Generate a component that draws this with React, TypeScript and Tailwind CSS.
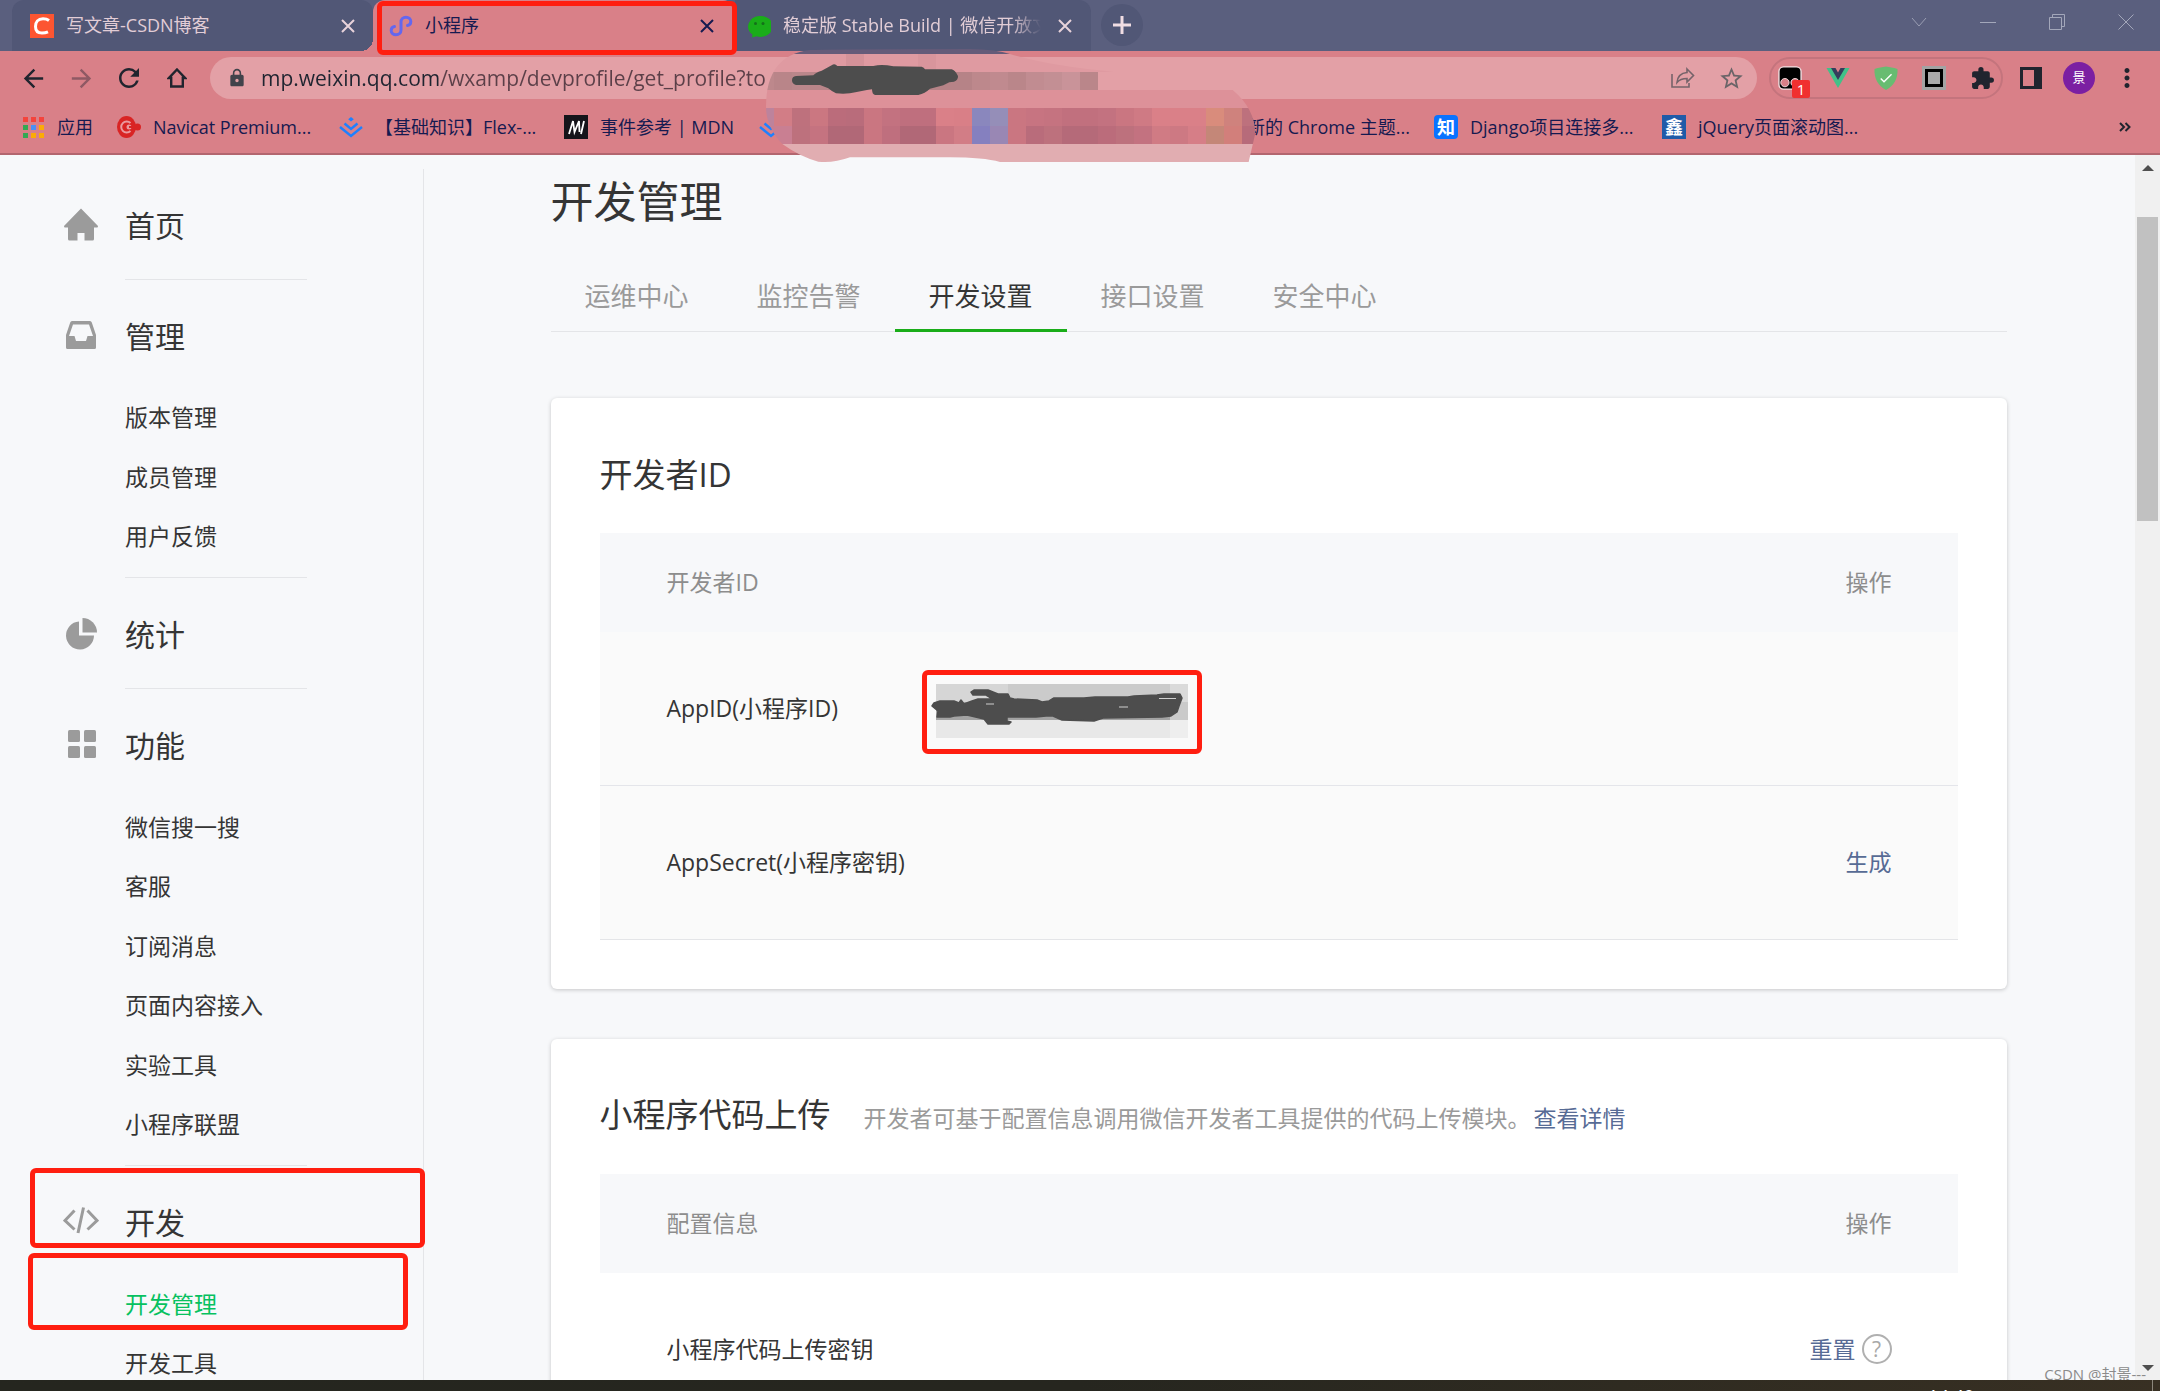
import type { ReactNode } from "react";
import {
  MdArrowBack,
  MdArrowForward,
  MdCheck,
  MdExtension,
  MdLock,
  MdMoreVert,
  MdRefresh,
  MdStarOutline,
} from "react-icons/md";

// ─── Data ─────────────────────────────────────────────────────────────────────

interface MenuGroup {
  title: string;
  icon: ReactNode;
  items: string[];
  listClass?: string;
}

const MENU: MenuGroup[] = [
  { title: "首页", icon: <HomeIcon />, items: [] },
  {
    title: "管理",
    icon: <InboxIcon />,
    items: ["版本管理", "成员管理", "用户反馈"],
    listClass: "h-[178px]",
  },
  { title: "统计", icon: <PieIcon />, items: [] },
  {
    title: "功能",
    icon: <GridIcon />,
    items: ["微信搜一搜", "客服", "订阅消息", "页面内容接入", "实验工具", "小程序联盟"],
    listClass: "h-[357px]",
  },
  {
    title: "开发",
    icon: <CodeIcon />,
    items: ["开发管理", "开发工具"],
    listClass: "h-[119px]",
  },
];

const ACTIVE_ITEM = "开发管理";
const MARKED_GROUP = "开发";

const TABS = ["运维中心", "监控告警", "开发设置", "接口设置", "安全中心"];
const ACTIVE_TAB = "开发设置";

interface Bookmark {
  title: string;
  icon?: ReactNode;
  width: string;
}

const BOOKMARKS: Bookmark[] = [
  { title: "应用", icon: <AppsIcon />, width: "w-24" },
  { title: "Navicat Premium...", icon: <NavicatIcon />, width: "w-[222px]" },
  { title: "【基础知识】Flex-...", icon: <JuejinIcon />, width: "w-[225px]" },
  { title: "事件参考 | MDN", icon: <MdnIcon />, width: "w-[195px]" },
  { title: "", icon: <JuejinIcon />, width: "w-[488px]" },
  { title: "新的 Chrome 主题...", width: "w-[187px]" },
  {
    title: "Django项目连接多...",
    icon: (
      <span className="flex size-6 items-center justify-center rounded bg-[#0a73ff] text-[18px] leading-6 font-bold text-white">
        知
      </span>
    ),
    width: "w-[228px]",
  },
  {
    title: "jQuery页面滚动图...",
    icon: (
      <span className="flex size-6 items-center justify-center bg-[#1f5ba8] text-[18px] leading-6 font-bold text-white">
        鑫
      </span>
    ),
    width: "w-[228px]",
  },
];

// Pixelated cells of the blurred address and bookmarks, 54 units wide each
const MOSAIC_UPPER = [
  "#bd839c", "#d27d86", "#be717d", "#cb7781", "#bb6c7b", "#b96c7b", "#ca7681",
  "#c37280", "#bf6f7e", "#bf6f7e", "#da8088", "#d97f87", "#8a87bd", "#958eb8",
  "#ca7681", "#c77481", "#c57380", "#c1707e", "#c1707e", "#c37280", "#ca7681",
  "#cf7a84", "#da8088", "#da8088", "#da8088", "#d98c7c", "#cf827d", "#bd717d",
];

const MOSAIC_LOWER = [
  "#c87f92", "#c97f92", "#bd717d", "#c57380", "#b16877", "#b16877", "#ca7681",
  "#bf6f7e", "#b16877", "#b16877", "#ca7681", "#d27d86", "#8580bf", "#9987b4",
  "#ca7681", "#b96c7b", "#bd717d", "#b56a79", "#b56a79", "#bb6c7b", "#bd717d",
  "#c37280", "#d07b84", "#cd7983", "#d67e87", "#c48778", "#d27f7b", "#b76b7a",
];

const MOSAIC_ADDRESS = [
  "#bd888c", "#b98589", "#bb878b", "#b98589", "#b68387", "#b68387", "#b68387",
  "#b68387", "#b68387", "#b68387", "#b68387", "#b68387", "#bd888c", "#c08a8f",
  "#ba868a", "#c18c91", "#c38f94", "#c99399", "#ba868a",
];

// ─── Icons ────────────────────────────────────────────────────────────────────

function HomeIcon() {
  return (
    <svg viewBox="0 0 36 36" className="size-9" fill="#9b9b9b">
      <path d="M18 1.5 L35 19 Q35 20.5 34 20.5 H31 V32 Q31 33.5 29.5 33.5 H21.5 V26 H14.5 V33.5 H6.500 Q5 33.500 5 32 V20.500 H2 Q1 20.500 1 19 Z" />
    </svg>
  );
}

function InboxIcon() {
  return (
    <svg viewBox="0 0 36 36" className="size-9" fill="#9b9b9b">
      <path
        fillRule="evenodd"
        d="M9 3 H27 Q28.300 3 28.800 4.500 L33 17 V29.500 Q33 31 31.500 31 H4.500 Q3 31 3 29.500 V17 L7.200 4.500 Q7.700 3 9 3 Z M10 6.500 L6 18 H11.500 L13 23 H23 L24.500 18 H30 L26 6.500 Z"
      />
    </svg>
  );
}

function PieIcon() {
  return (
    <svg viewBox="0 0 36 36" className="size-9" fill="#9b9b9b">
      <path d="M16 5.500 V19.500 H31 A14 14 0 1 1 16 5.500 Z" />
      <path d="M19.500 2 A14.500 14.500 0 0 1 34 16.500 H19.500 Z" />
    </svg>
  );
}

function GridIcon() {
  return (
    <svg viewBox="0 0 36 36" className="size-9" fill="#9b9b9b">
      <rect x="5" y="3" width="12" height="12" rx="1.500" />
      <rect x="21" y="3" width="12" height="12" rx="1.500" />
      <rect x="5" y="19" width="12" height="12" rx="1.500" />
      <rect x="21" y="19" width="12" height="12" rx="1.500" />
    </svg>
  );
}

function CodeIcon() {
  return (
    <svg viewBox="0 0 36 36" className="size-9" fill="none" stroke="#9b9b9b" strokeWidth="3">
      <path d="M11.500 6.500 L2 16.500 L11.500 25.500 M24.500 6.500 L34 16.500 L24.500 25.500 M20.500 3.500 L15 29" />
    </svg>
  );
}

function AppsIcon() {
  const colors = [
    "#f4443c", "#f4443c", "#f4443c", "#34a853", "#4a90f5", "#fbab07", "#34a853", "#fbab07", "#fbab07",
  ];
  return (
    <svg viewBox="0 0 24 24" className="size-6">
      {colors.map((color, i) => (
        <rect key={i} x={2 + (i % 3) * 8} y={2 + Math.floor(i / 3) * 8} width="5" height="5" fill={color} />
      ))}
    </svg>
  );
}

function NavicatIcon() {
  return (
    <svg viewBox="0 0 24 24" className="size-6" fill="none">
      <ellipse cx="9.500" cy="12" rx="9.500" ry="11" fill="#d92424" />
      <circle cx="20.500" cy="12" r="3.500" fill="#d92424" />
      <path d="M13.500 8 A5.500 5.500 0 1 0 13.500 16" stroke="#e99a9f" strokeWidth="2" />
      <circle cx="12" cy="12" r="2.500" fill="#e99a9f" />
      <path d="M12 12 H20" stroke="#d92424" strokeWidth="2" />
    </svg>
  );
}

function JuejinIcon() {
  return (
    <svg viewBox="0 0 24 24" className="size-6" fill="none" stroke="#1e80ff" strokeWidth="2.400">
      <path d="M1 12 L12 21 L23 12 M5.500 8.500 L12 14 L18.500 8.500" />
      <path d="M12 2 L14.800 4.300 L12 6.500 L9.200 4.300 Z" fill="#1e80ff" stroke="none" />
    </svg>
  );
}

function MdnIcon() {
  return (
    <svg viewBox="0 0 24 24" className="size-6" fill="none">
      <rect width="24" height="24" fill="#15141a" />
      <path d="M5 19 L9 6 L10.500 17 L15 6 L15.500 17 M17 19 L20 6" stroke="#fff" strokeWidth="1.800" />
    </svg>
  );
}

function CsdnIcon() {
  return (
    <svg viewBox="0 0 24 24" className="size-6 shrink-0" fill="none">
      <rect width="24" height="24" fill="#fc5531" />
      <path
        d="M19 6.500 C17 5 15.500 4.800 13 4.800 C8 4.800 5.500 8 5.500 12.500 C5.500 17 8 19 12 19 C14.500 19 16 18.700 18 17.800"
        stroke="#fff"
        strokeWidth="3"
      />
    </svg>
  );
}

function MiniProgramIcon() {
  return (
    <svg viewBox="0 0 24 24" className="size-6 shrink-0" fill="none" stroke="#6467ef" strokeWidth="3" strokeLinecap="round">
      <path d="M5.500 12.500 C3 13 2.200 14.800 2.200 16.500 C2.200 19 4.300 20.800 7 20.800 C10 20.800 12 18.800 12 16 V8 C12 5.200 14 3.200 17 3.200 C19.700 3.200 21.800 5 21.800 7.500 C21.800 9.200 21 11 18.500 11.500" />
    </svg>
  );
}

function WechatIcon() {
  return (
    <svg viewBox="0 0 24 24" className="size-6 shrink-0">
      <path d="M12 2 A12 10.500 0 1 1 9.500 22.200 L5 23.500 L5.500 20.500 A12 10.500 0 0 1 12 2 Z" fill="#1aad19" />
      <circle cx="8.500" cy="9.500" r="1.500" fill="#14711a" />
      <circle cx="16" cy="9.500" r="1.500" fill="#14711a" />
    </svg>
  );
}

function CloseIcon({ color }: { color: string }) {
  return (
    <svg viewBox="0 0 14 14" className="size-3.5" fill="none" stroke={color} strokeWidth="2">
      <path d="M1 1 L13 13 M13 1 L1 13" />
    </svg>
  );
}

// ─── Browser chrome ───────────────────────────────────────────────────────────

function TabStrip() {
  return (
    <div className="flex h-[51px] bg-[#5a5f7e] pl-3 text-[18px]">
      <div className="flex w-[361px] items-center gap-3 rounded-t-xl bg-[#515776] pr-[13px] pl-[18px] text-[#e2cdd6]">
        <CsdnIcon />
        <span className="flex-1 truncate">写文章-CSDN博客</span>
        <button type="button" aria-label="关闭标签页" className="flex size-6 items-center justify-center">
          <CloseIcon color="#e8d3da" />
        </button>
      </div>

      <div className="relative flex w-[362px] items-center gap-3 rounded-t-xl bg-[#d98088] pr-4 pl-4 text-[#161a50]">
        <span className="absolute bottom-0 -left-3 size-3 bg-[radial-gradient(circle_at_0_0,transparent_12px,#d98088_12px)]" />
        <MiniProgramIcon />
        <span className="flex-1 truncate">小程序</span>
        <button type="button" aria-label="关闭标签页" className="flex size-6 items-center justify-center">
          <CloseIcon color="#161a50" />
        </button>
        <span className="absolute top-px -right-0.5 -bottom-1 left-1 z-20 rounded-md border-[5px] border-[#ff1e10]" />
      </div>

      <div className="flex w-[356px] items-center gap-3 rounded-tr-xl bg-[#515776] pr-3.5 pl-3 text-[#e2cdd6]">
        <WechatIcon />
        <span className="flex-1 overflow-hidden whitespace-nowrap [mask-image:linear-gradient(90deg,#000_88%,transparent)]">
          稳定版 Stable Build | 微信开放文
        </span>
        <button type="button" aria-label="关闭标签页" className="flex size-6 items-center justify-center">
          <CloseIcon color="#e8d3da" />
        </button>
      </div>

      <button
        type="button"
        aria-label="新标签页"
        className="mt-1 ml-2.5 flex size-[42px] items-center justify-center rounded-full bg-[#515776]">
        <svg viewBox="0 0 18 18" className="size-[18px]" stroke="#f0dde3" strokeWidth="3">
          <path d="M9 0 V18 M0 9 H18" />
        </svg>
      </button>

      {/* Window controls */}
      <div className="ml-auto flex h-[43px] items-center">
        <button type="button" aria-label="搜索标签页" className="flex w-[69px] justify-center">
          <svg viewBox="0 0 16 16" className="size-4" fill="none" stroke="#9a9eb3">
            <path d="M1 4 L8 12 L15 4" />
          </svg>
        </button>
        <button type="button" aria-label="最小化" className="flex w-[69px] justify-center">
          <svg viewBox="0 0 16 16" className="size-4" fill="none" stroke="#a3a7ba">
            <path d="M0 8.500 H16" />
          </svg>
        </button>
        <button type="button" aria-label="还原" className="flex w-[69px] justify-center">
          <svg viewBox="0 0 16 16" className="size-4" fill="none" stroke="#a3a7ba">
            <path d="M0.500 3.500 H12.500 V15.500 H0.500 Z M3.500 3.500 V0.500 H15.500 V12.500 H12.500" />
          </svg>
        </button>
        <button type="button" aria-label="关闭" className="flex w-[69px] justify-center">
          <svg viewBox="0 0 16 16" className="size-4" fill="none" stroke="#a3a7ba">
            <path d="M0.500 0.500 L15.500 15.500 M15.500 0.500 L0.500 15.500" />
          </svg>
        </button>
      </div>
    </div>
  );
}

function ToolButton({ label, children }: { label: string; children: ReactNode }) {
  return (
    <button type="button" aria-label={label} className="flex w-12 shrink-0 items-center justify-center">
      {children}
    </button>
  );
}

function Toolbar() {
  return (
    <div className="flex h-[54px] items-center px-[9px] text-[#20242e]">
      <ToolButton label="后退">
        <MdArrowBack size={29} />
      </ToolButton>
      <ToolButton label="前进">
        <MdArrowForward size={29} color="#8f5964" />
      </ToolButton>
      <ToolButton label="重新加载">
        <MdRefresh size={30} />
      </ToolButton>
      <ToolButton label="主页">
        <svg viewBox="0 0 20 20" className="size-5" fill="none" stroke="#20242e" strokeWidth="2.400">
          <path d="M10 1.500 L18 10 H15.800 V18.500 H4.200 V10 H2 Z" />
        </svg>
      </ToolButton>

      {/* Address bar */}
      <div className="ml-[9px] flex h-[42px] min-w-0 flex-1 items-center rounded-full bg-[#e3a0a6] pr-0.5 pl-[17px]">
        <MdLock size={20} color="#41434b" className="shrink-0" />
        <input
          type="text"
          aria-label="地址"
          defaultValue="mp.weixin.qq.com/wxamp/devprofile/get_profile?to"
          className="ml-3.5 min-w-0 flex-1 bg-[linear-gradient(90deg,#1f2430_180px,#5b3f48_180px)] bg-clip-text text-[21px] leading-8 text-transparent outline-none"
        />
        <ToolButton label="分享">
          <svg viewBox="0 0 24 24" className="size-6" fill="none" stroke="#75636a" strokeWidth="1.600">
            <path d="M1 8 V21 H18 V17" />
            <path d="M16 3 L22.500 9.500 L16 16 V12.500 C11 12.500 8.500 13.500 6 16.500 C6.500 11 9.500 7 16 6.500 Z" />
          </svg>
        </ToolButton>
        <ToolButton label="收藏">
          <MdStarOutline size={27} color="#6a6468" />
        </ToolButton>
      </div>

      {/* Extensions */}
      <div className="mr-1 ml-3 flex h-[42px] w-[234px] shrink-0 items-center justify-center rounded-full border-2 border-[#c4747d]">
        <ToolButton label="Tampermonkey">
          <span className="relative">
            <svg viewBox="0 0 26 26" className="size-6">
              <rect x="1" y="1" width="24" height="24" rx="5" fill="#000" stroke="#f3dfe2" strokeWidth="1.500" />
              <circle cx="7.500" cy="18" r="4.500" fill="#d98088" stroke="#f3dfe2" />
              <circle cx="18.500" cy="18" r="4.500" fill="#d98088" stroke="#f3dfe2" />
            </svg>
            <span className="absolute -right-2 -bottom-2 flex h-[18px] w-[18px] items-center justify-center rounded-xs bg-[#f0302f] text-[15px] leading-none text-white">
              1
            </span>
          </span>
        </ToolButton>
        <ToolButton label="Vue.js devtools">
          <svg viewBox="0 0 24 22" className="h-[22px] w-6">
            <path d="M0.500 1 H6 L12 11 L18 1 H23.500 L12 21 Z" fill="#41c188" />
            <path d="M5 1 H9.500 L12 5.500 L14.500 1 H19 L12 13 Z" fill="#353d5c" />
          </svg>
        </ToolButton>
        <ToolButton label="AdGuard">
          <span className="relative flex size-6 items-center justify-center">
            <svg viewBox="0 0 24 24" className="absolute inset-0 size-6">
              <path d="M12 0.500 C16 1 19 1.500 23.500 3 C24 13 20 19.500 12 24 C4 19.500 0 13 0.500 3 C5 1.500 8 1 12 0.500 Z" fill="#68bc71" />
            </svg>
            <MdCheck size={16} color="#fff" className="relative" />
          </span>
        </ToolButton>
        <ToolButton label="扩展">
          <svg viewBox="0 0 24 24" className="size-6">
            <rect width="24" height="24" fill="#a3a3a3" />
            <rect x="3" y="3" width="18" height="18" fill="#000" />
            <rect x="6" y="6" width="12" height="12" fill="#a9a9a9" />
          </svg>
        </ToolButton>
        <ToolButton label="扩展程序">
          <MdExtension size={25} />
        </ToolButton>
      </div>
      <ToolButton label="侧边栏">
        <svg viewBox="0 0 22 22" className="size-[22px]">
          <path fillRule="evenodd" d="M0 0 H22 V22 H0 Z M3 3 V19 H14 V3 Z" fill="#20242e" />
        </svg>
      </ToolButton>
      <ToolButton label="个人资料">
        <span className="flex size-8 items-center justify-center rounded-full bg-[#7b1fa2] text-[13px] text-white">景</span>
      </ToolButton>
      <ToolButton label="菜单">
        <MdMoreVert size={30} />
      </ToolButton>
    </div>
  );
}

function BookmarkBar() {
  return (
    <nav className="flex h-[50px] items-center border-b-2 border-[#b3666f] pr-[29px] pl-[21px] pb-1 text-[18px] text-[#161a50]">
      {BOOKMARKS.map((bookmark, i) => (
        <a key={i} href="#" aria-label={bookmark.title || "书签"} className={`flex shrink-0 items-center gap-3 ${bookmark.width}`}>
          {bookmark.icon}
          <span className="whitespace-nowrap">{bookmark.title}</span>
        </a>
      ))}
      <button type="button" aria-label="更多书签" className="ml-auto">
        <svg viewBox="0 0 12 12" className="size-3" fill="none" stroke="#20242e" strokeWidth="2">
          <path d="M1 2 L5 6 L1 10 M6.500 2 L10.500 6 L6.500 10" />
        </svg>
      </button>
    </nav>
  );
}

function MosaicRow({ colors, y }: { colors: string[]; y: number }) {
  return (
    <>
      {colors.map((color, i) => (
        <rect key={i} x={18 + i * 54} y={y} width="54.500" height="54.500" fill={color} />
      ))}
    </>
  );
}

// Pixelated patch and marker stroke that hide the token
function AddressMask() {
  return (
    <svg viewBox="0 0 1560 390" className="pointer-events-none absolute top-10 left-[750px] h-[130px] w-[520px]">
      <clipPath id="mask-shape">
        <path d="M48 200 Q48 45 180 30 Q260 27 660 27 Q740 29 780 42 Q900 78 1090 95 L1044 96 V150 H1448 Q1514 205 1516 280 L1496 366 H750 Q700 352 600 352 H300 Q250 370 205 365 Q150 350 97 312 Q48 260 48 200 Z" />
      </clipPath>
      <g clipPath="url(#mask-shape)">
        <rect y="0" width="1560" height="42" fill="#655b79" />
        <rect y="42" width="1560" height="54" fill="#df9aa1" />
        <rect x="288" y="42" width="54" height="54" fill="#d49299" />
        <rect x="504" y="42" width="54" height="54" fill="#d9959c" />
        <MosaicRow colors={MOSAIC_ADDRESS} y={96} />
        <rect y="150" width="1560" height="54" fill="#dd9199" />
        <MosaicRow colors={MOSAIC_UPPER} y={204} />
        <MosaicRow colors={MOSAIC_LOWER} y={258} />
        <rect y="312" width="1560" height="60" fill="#e1adb1" />
      </g>
      <path
        d="M138 108 L190 106 Q195 98 215 92 L245 76 Q254 68 262 78 H370 Q395 72 430 79 L515 80 Q522 82 525 88 H605 Q615 90 624 108 Q625 120 612 125 L598 127 L580 136 L540 146 Q525 160 505 165 H375 Q366 163 366 147 L320 156 Q290 164 258 160 Q245 154 235 145 L210 135 H138 Q126 132 126 121 Q126 109 138 108 Z"
        fill="#4d4d4d"
      />
    </svg>
  );
}

// ─── Sidebar ──────────────────────────────────────────────────────────────────

function Sidebar() {
  return (
    <aside className="w-[424px] shrink-0 pt-3.5">
      <ul className="border-r border-[#e4e5e8]">
        {MENU.map((group, i) => (
          <li key={group.title} className="relative">
            {i > 0 && <div className="ml-[125px] h-px w-[182px] bg-[#e4e5e8]" />}
            <div className={group.items.length ? "pt-1.5 pb-[11px]" : "pt-1.5 pb-1"}>
              <a href="#" className="flex h-[100px] items-center pl-[63px] text-[30px] text-[#353535]">
                {group.icon}
                <span className="ml-[26px]">{group.title}</span>
              </a>
              {group.items.length > 0 && (
                <ul className={`mt-0.5 grid auto-rows-fr ${group.listClass}`}>
                  {group.items.map((item) => (
                    <li key={item} className="relative flex items-center pl-[125px] text-[23px]">
                      <a href="#" className={item === ACTIVE_ITEM ? "text-[#07c160]" : "text-[#353535]"}>
                        {item}
                      </a>
                      {item === ACTIVE_ITEM && (
                        <span className="absolute -top-[21px] right-[15px] left-7 h-[77px] rounded-md border-[5px] border-[#ff1e10]" />
                      )}
                    </li>
                  ))}
                </ul>
              )}
            </div>
            {group.title === MARKED_GROUP && (
              <span className="absolute top-[3px] -right-0.5 left-[30px] h-20 rounded-md border-[5px] border-[#ff1e10]" />
            )}
          </li>
        ))}
      </ul>
    </aside>
  );
}

// ─── Cards ────────────────────────────────────────────────────────────────────

function Card({ children }: { children: ReactNode }) {
  return (
    <section className="rounded-md bg-white px-[49px] pb-[49px] shadow-[0_1px_4px_rgba(0,0,0,0.2)]">
      {children}
    </section>
  );
}

function MaskedAppId() {
  return (
    <div className="h-[84px] w-[280px] rounded-md border-[5px] border-[#ff1e10]">
      <svg viewBox="5 5 270 74" className="block h-full w-full">
        <rect x="14" y="14" width="252" height="18" fill="#cbcbcb" />
        <rect x="14" y="14" width="72" height="18" fill="#d6d6d6" />
        <rect x="14" y="32" width="252" height="18" fill="#a3a3a3" />
        <rect x="14" y="50" width="252" height="18" fill="#e8e8e8" />
        <rect x="248" y="14" width="18" height="18" fill="#dadada" />
        <rect x="248" y="32" width="18" height="18" fill="#cacaca" />
        <rect x="248" y="50" width="18" height="18" fill="#eeeeee" />
        <path
          d="M12 33 L18 31 H32 L37 33 L39 30 L42 34 L50 31 L56 29 H68 L74 31 L64 25 L51 25 L49 22 L52 20 H66 L76 24 H86 L88 28 L92 29 L115 30 L120 32 L127 31 L132 28 H162 L173 27 H206 L212 26 L235 25 L242 24 H258 L260 28 L257 36 L255 42 L249 46 L240 47 L181 48 L172 51 L140 50 L131 46 H124 L114 47 H85 V51 L89 52 L87 54 H66 L62 49 L45 45 L32 46 L28 47 H15 L16 41 L10 36 Z"
          fill="#4d4d4d"
          stroke="#4d4d4d"
          strokeWidth="1.500"
          strokeLinejoin="round"
        />
        <path d="M237 28.500 H254 M197 37 H206 M64 34 H72" stroke="#d0d0d0" strokeWidth="1" />
      </svg>
    </div>
  );
}

function DeveloperIdCard() {
  return (
    <Card>
      <h2 className="flex h-[135px] items-center pt-[18px] text-[33px] text-[#353535]">开发者ID</h2>
      <table className="w-full border-collapse text-left text-[23px] text-[#353535]">
        <thead>
          <tr className="h-[99px] bg-[#f7f8fa] text-[#8d8d8d]">
            <th colSpan={2} className="pl-[67px] font-normal">开发者ID</th>
            <th className="pr-[66px] text-right font-normal">操作</th>
          </tr>
        </thead>
        <tbody>
          <tr className="h-[153px] border-b border-[#e4e5ea] bg-[#fafafa]">
            <td className="w-[322px] pl-[67px]">AppID(小程序ID)</td>
            <td className="pt-2">
              <MaskedAppId />
            </td>
            <td />
          </tr>
          <tr className="h-[154px] border-b border-[#e4e5e8] bg-[#fafafa]">
            <td className="pl-[67px] whitespace-nowrap">AppSecret(小程序密钥)</td>
            <td />
            <td className="pr-[66px] text-right">
              <a href="#" className="text-[#576b95]">生成</a>
            </td>
          </tr>
        </tbody>
      </table>
    </Card>
  );
}

function CodeUploadCard() {
  return (
    <Card>
      <div className="flex h-[135px] items-center pt-[18px]">
        <div className="flex items-baseline gap-[33px]">
          <h2 className="text-[33px] text-[#353535]">小程序代码上传</h2>
          <p className="text-[23px] text-[#9a9a9a]">
            开发者可基于配置信息调用微信开发者工具提供的代码上传模块。
            <a href="#" className="ml-[3px] text-[#576b95]">查看详情</a>
          </p>
        </div>
      </div>
      <table className="w-full border-collapse text-left text-[23px] text-[#353535]">
        <thead>
          <tr className="h-[99px] bg-[#f7f8fa] text-[#8d8d8d]">
            <th className="pl-[67px] font-normal">配置信息</th>
            <th className="pr-[66px] text-right font-normal">操作</th>
          </tr>
        </thead>
        <tbody>
          <tr className="h-[153px]">
            <td className="pl-[67px]">小程序代码上传密钥</td>
            <td className="pr-[66px]">
              <div className="flex items-center justify-end gap-1.5">
                <a href="#" className="text-[#576b95]">重置</a>
                <button
                  type="button"
                  aria-label="帮助"
                  className="flex size-[30px] items-center justify-center rounded-full border-2 border-[#b0b0b0] text-[21px] leading-none text-[#a8a8a8]">
                  ?
                </button>
              </div>
            </td>
          </tr>
        </tbody>
      </table>
    </Card>
  );
}

function Scrollbar() {
  return (
    <div className="flex w-[25px] shrink-0 flex-col items-center bg-[#f0f0f0] pt-2.5 pb-[9px]">
      <svg viewBox="0 0 12 6" className="h-1.5 w-3" fill="#4f4f4f">
        <path d="M6 0 L12 6 H0 Z" />
      </svg>
      <div className="mt-[46px] h-[304px] w-[21px] bg-[#c1c1c1]" />
      <svg viewBox="0 0 12 6" className="mt-auto h-1.5 w-3" fill="#4f4f4f">
        <path d="M0 0 H12 L6 6 Z" />
      </svg>
    </div>
  );
}

// ─── Page ─────────────────────────────────────────────────────────────────────

export default function App() {
  return (
    <div className="flex h-screen flex-col overflow-hidden bg-[#f7f8fa] font-['Open_Sans','Noto_Sans_CJK_SC',sans-serif]">
      <header className="relative z-10 shrink-0 bg-[#d98088]">
        <TabStrip />
        <Toolbar />
        <BookmarkBar />
        <AddressMask />
      </header>

      <div className="relative flex min-h-0 flex-1 overflow-hidden">
        <Sidebar />
        <main className="min-w-0 flex-1 pr-0.5">
          <div className="mx-auto max-w-[1456px]">
            <h1 className="flex h-[92px] items-center text-[43px] leading-none text-[#353535]">开发管理</h1>
            <div role="tablist" className="mb-[66px] flex h-[85px] border-b border-[#e4e5e8]">
              {TABS.map((tab) => (
                <button
                  key={tab}
                  type="button"
                  role="tab"
                  aria-selected={tab === ACTIVE_TAB}
                  className={`-mb-px w-[172px] border-b-[3px] pt-5 pb-1 text-[26px] ${
                    tab === ACTIVE_TAB
                      ? "border-[#1aad19] text-[#353535]"
                      : "border-transparent text-[#9a9a9a]"
                  }`}>
                  {tab}
                </button>
              ))}
            </div>
            <div className="flex flex-col gap-[50px]">
              <DeveloperIdCard />
              <CodeUploadCard />
            </div>
          </div>
        </main>
        <Scrollbar />
        <span className="absolute right-3.5 -bottom-0.5 text-[15px] leading-4 text-[#8b8b8b]">CSDN @封景---</span>
      </div>

      {/* Top edge of the taskbar */}
      <footer className="flex h-[11px] shrink-0 justify-end overflow-hidden bg-linear-to-r from-[#25261f] via-[#26261f] to-[#383023] pr-[7px]">
        <time className="mr-[178px] pt-1 text-[18px] leading-6 text-white">14:40</time>
        <span className="h-full w-px bg-[#8c877c]" />
      </footer>
    </div>
  );
}
